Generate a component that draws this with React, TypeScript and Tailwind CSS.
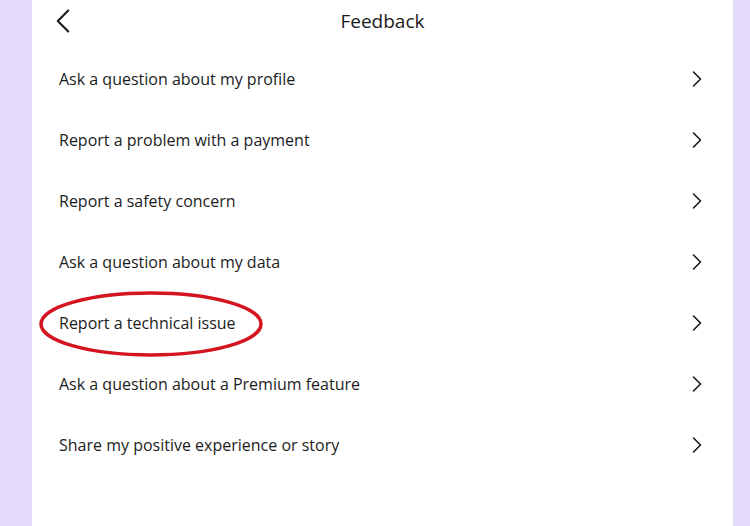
import { ChevronLeft, ChevronRight } from "lucide-react";

const OPTIONS = [
  "Ask a question about my profile",
  "Report a problem with a payment",
  "Report a safety concern",
  "Ask a question about my data",
  "Report a technical issue",
  "Ask a question about a Premium feature",
  "Share my positive experience or story",
];

const HIGHLIGHTED = "Report a technical issue";

export default function App() {
  return (
    <div
      className="flex h-[526px] w-[750px] overflow-hidden bg-[#e4dafb]"
      style={{ fontFamily: '"Open Sans", "Noto Sans", sans-serif' }}
    >
      <main className="ml-[32px] flex h-full w-[701px] flex-col bg-white">
        <header className="relative flex h-[42px] items-center justify-center">
          <button className="absolute left-[10px] top-[0px] text-[#1a1a1a]" aria-label="Back">
            <ChevronLeft className="h-[42px] w-[42px]" strokeWidth={1.2} />
          </button>
          <h1 className="text-[19px] text-[#1a1a1a]">Feedback</h1>
        </header>
        <ul className="mt-[6px] flex flex-col">
          {OPTIONS.map((label) => (
            <li key={label} className="flex h-[61px] items-center justify-between pl-[27px] pr-[22px]">
              <span className="relative text-[16px] font-medium text-[#1c1c1c]">
                {label}
                {label === HIGHLIGHTED ? (
                  <svg
                    className="pointer-events-none absolute left-[-21px] top-[-20px]"
                    width="226"
                    height="66"
                    viewBox="0 0 226 66"
                  >
                    <ellipse cx="113" cy="33" rx="110" ry="31" fill="none" stroke="#d4141f" strokeWidth="3.5" />
                  </svg>
                ) : null}
              </span>
              <ChevronRight className="h-[28px] w-[28px] text-[#1a1a1a]" strokeWidth={1.4} />
            </li>
          ))}
        </ul>
      </main>
    </div>
  );
}
